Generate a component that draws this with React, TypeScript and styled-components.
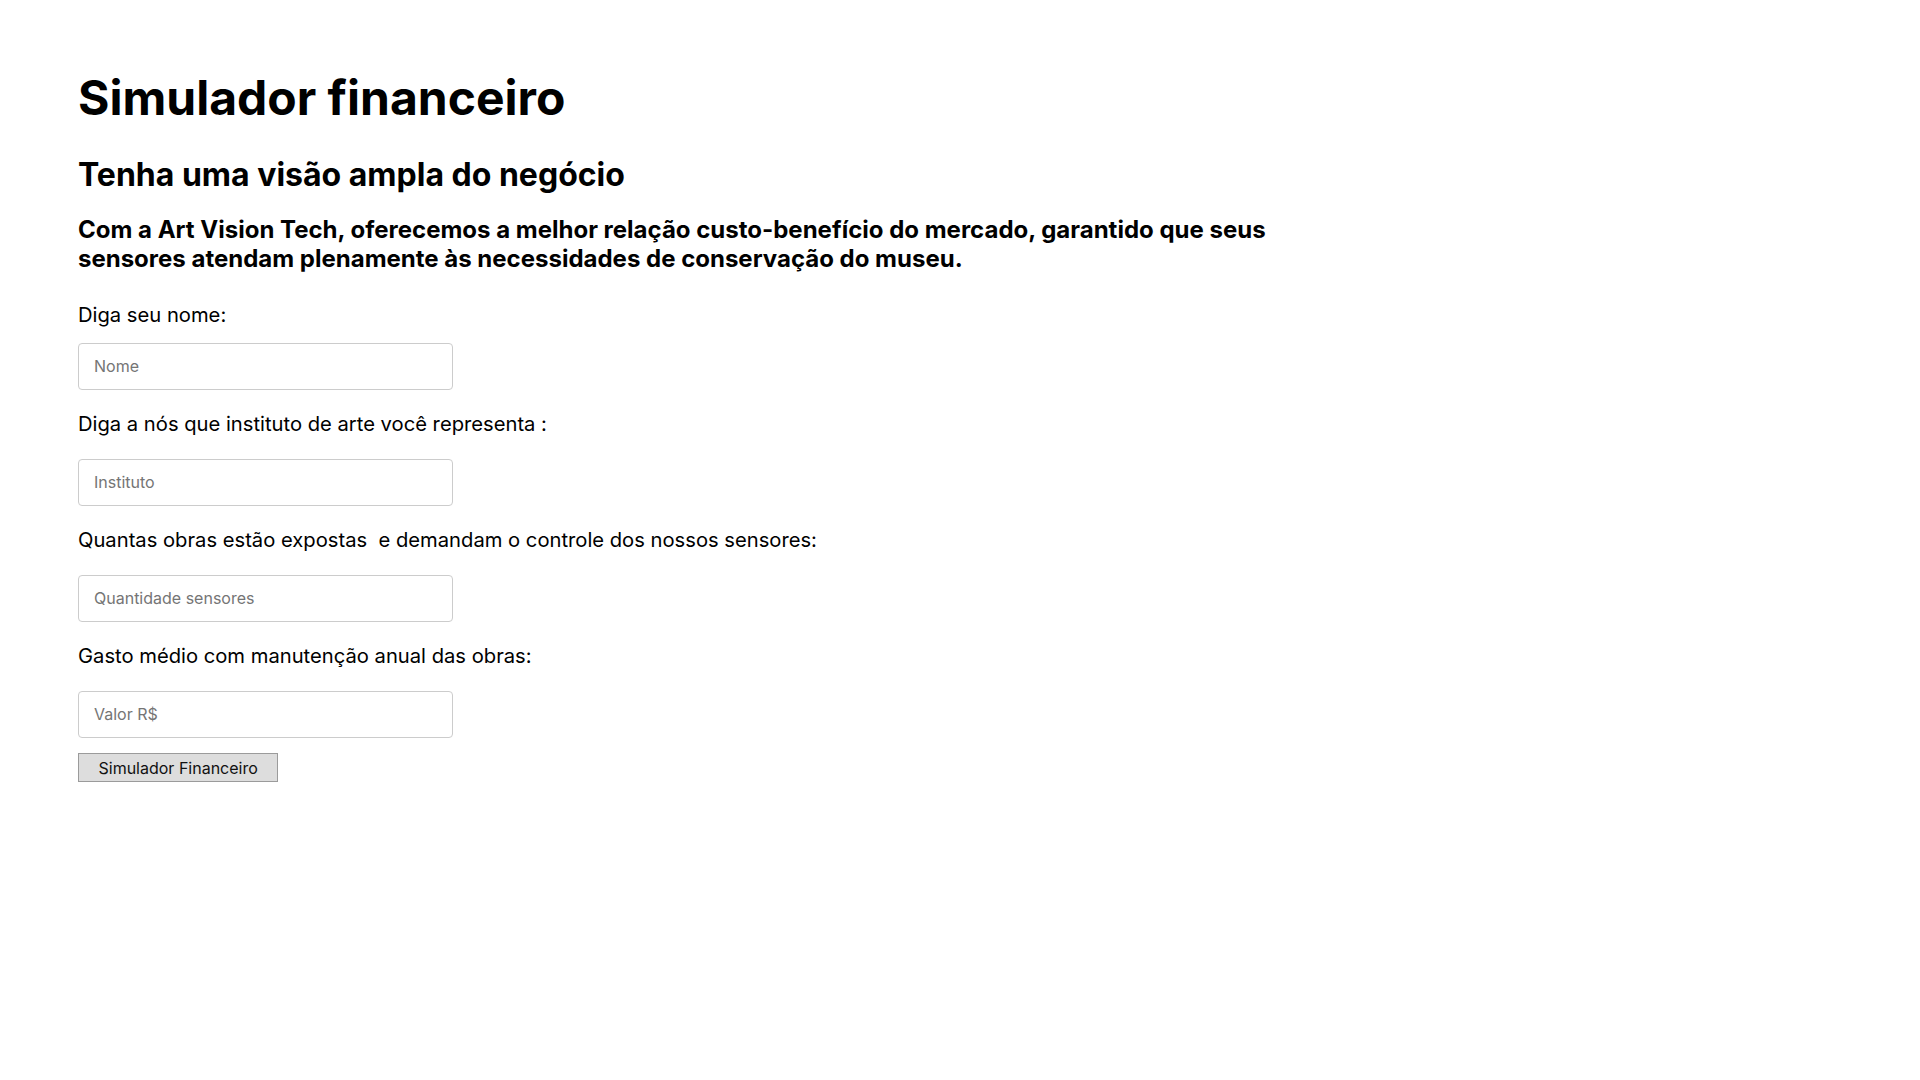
import React from "react";
import styled, { createGlobalStyle } from "styled-components";

const GlobalStyle = createGlobalStyle`
  html, body {
    margin: 0;
    padding: 0;
    background: #ffffff;
  }
  body {
    font-family: Inter, "Noto Sans", "Liberation Sans", sans-serif;
    color: #000000;
  }
`;

const Page = styled.main`
  display: flex;
  flex-direction: column;
  align-items: flex-start;
  padding: 68.5px 0 0 78px;
`;

const Title = styled.h1`
  margin: 0;
  font-size: 48px;
  font-weight: 700;
  line-height: 58px;
`;

const Subtitle = styled.h2`
  margin: 28px 0 0;
  font-size: 32px;
  font-weight: 700;
  line-height: 39px;
`;

const Lead = styled.p`
  margin: 21px 0 0;
  max-width: 1240px;
  font-size: 24px;
  font-weight: 700;
  line-height: 29px;
`;

const Form = styled.form`
  display: flex;
  flex-direction: column;
  align-items: flex-start;
  margin-top: 30.5px;
`;

const Label = styled.label<{ $first?: boolean }>`
  display: block;
  margin: ${(p) => (p.$first ? "0 0 15.5px" : "22.5px 0 22.5px")};
  font-size: 20.2px;
  font-weight: 400;
  line-height: 24px;
  color: #000;
  white-space: pre;
`;

const Input = styled.input`
  box-sizing: border-box;
  width: 375px;
  height: 47px;
  padding: 0 15px;
  border: 1px solid #cccccc;
  border-radius: 4px;
  background: #ffffff;
  font-family: Inter, "Noto Sans", "Liberation Sans", sans-serif;
  font-size: 16px;
  color: #000;
  outline: none;

  &::placeholder {
    color: #757575;
  }
`;

const Button = styled.button`
  box-sizing: border-box;
  margin-top: 15.5px;
  height: 29px;
  padding: 0 19.5px;
  border: 1px solid #9b9b9b;
  border-radius: 0;
  background: #dddddd;
  font-family: Inter, "Noto Sans", "Liberation Sans", sans-serif;
  font-size: 16px;
  color: #111111;
  cursor: pointer;
`;

const fields = [
  { id: "nome", label: "Diga seu nome:", placeholder: "Nome" },
  {
    id: "instituto",
    label: "Diga a nós que instituto de arte você representa :",
    placeholder: "Instituto",
  },
  {
    id: "quantidade",
    label: "Quantas obras estão expostas  e demandam o controle dos nossos sensores:",
    placeholder: "Quantidade sensores",
  },
  {
    id: "valor",
    label: "Gasto médio com manutenção anual das obras:",
    placeholder: "Valor R$",
  },
];

export default function App() {
  return (
    <>
      <GlobalStyle />
      <Page>
        <Title>Simulador financeiro</Title>
        <Subtitle>Tenha uma visão ampla do negócio</Subtitle>
        <Lead>
          Com a Art Vision Tech, oferecemos a melhor relação custo-benefício do mercado,
          garantido que seus sensores atendam plenamente às necessidades de conservação do
          museu.
        </Lead>
        <Form onSubmit={(e) => e.preventDefault()}>
          {fields.map((f, i) => (
            <React.Fragment key={f.id}>
              <Label htmlFor={f.id} $first={i === 0}>
                {f.label}
              </Label>
              <Input id={f.id} type="text" placeholder={f.placeholder} />
            </React.Fragment>
          ))}
          <Button type="submit">Simulador Financeiro</Button>
        </Form>
      </Page>
    </>
  );
}
